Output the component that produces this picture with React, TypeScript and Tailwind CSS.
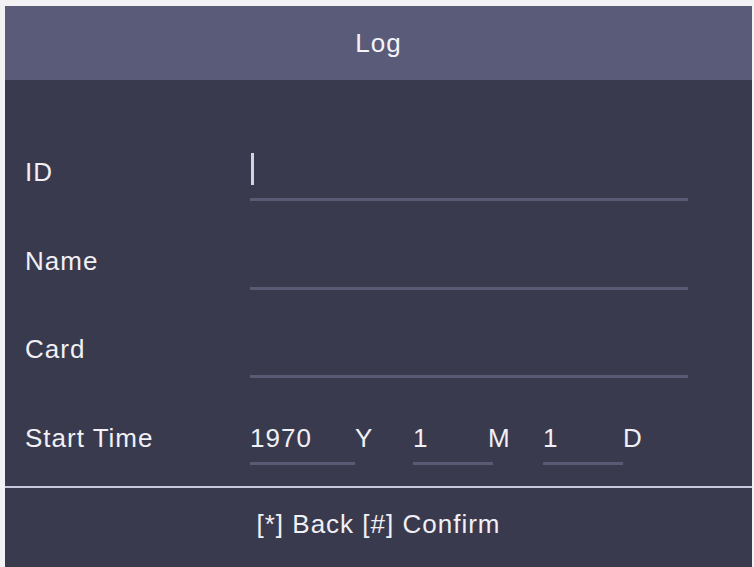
import React from "react";

const font = { fontFamily: '"Liberation Sans", Arial, sans-serif' };

// one label + underlined input line
const FieldRow = ({
  label,
  height,
  cursor,
}: {
  label: string;
  height: string;
  cursor?: boolean;
}) => (
  <div className={`flex items-end pr-[64px] ${height}`}>
    <div className="w-[245px] pl-[20px] mb-[16px] text-[26px] leading-[30px] tracking-[1px] text-[#f0f0f5]">
      {label}
    </div>
    <div className="flex-1 mb-[2px] h-[52px] border-b-[3px] border-[#595a73] flex items-start">
      {cursor && <div className="ml-[1px] mt-[4px] w-[3px] h-[32px] bg-[#d4d4e0]" />}
    </div>
  </div>
);

export default function App() {
  return (
    <div
      className="w-[754px] h-[567px] bg-[#f2f2f5] pt-[6px] pl-[5px] pr-[2px] overflow-hidden"
      style={font}
    >
      <div className="h-full flex flex-col bg-[#3a3a4e]">
        {/* title bar */}
        <div className="h-[74px] shrink-0 bg-[#5a5b78] flex items-center justify-center text-[26px] tracking-[1px] text-[#f3f3f8]">
          Log
        </div>

        {/* form */}
        <div className="pt-[34px]">
          <FieldRow label="ID" height="h-[89px]" cursor />
          <FieldRow label="Name" height="h-[89px]" />
          <FieldRow label="Card" height="h-[88px]" />

          {/* start date */}
          <div className="flex items-end h-[87px]">
            <div className="w-[245px] pl-[20px] mb-[14px] text-[26px] leading-[30px] tracking-[1px] text-[#f0f0f5]">
              Start Time
            </div>
            <div className="flex items-end text-[26px] leading-[30px] tracking-[1px] text-[#f0f0f5]">
              <div className="w-[105px] mb-[2px] pb-[9px] border-b-[3px] border-[#595a73]">1970</div>
              <div className="w-[58px] mb-[14px]">Y</div>
              <div className="w-[80px] mb-[2px] pb-[9px] border-b-[3px] border-[#595a73]">1</div>
              <div className="w-[55px] -ml-[5px] mb-[14px]">M</div>
              <div className="w-[80px] mb-[2px] pb-[9px] border-b-[3px] border-[#595a73]">1</div>
              <div className="mb-[14px]">D</div>
            </div>
          </div>
        </div>

        <div className="h-[19px] shrink-0" />
        <div className="h-[2px] shrink-0 bg-[#c8c8dc]" />

        {/* key hints */}
        <div className="flex-1 flex items-center justify-center pb-[6px] text-[26px] tracking-[1px] text-[#f0f0f5]">
          [*] Back [#] Confirm
        </div>
      </div>
    </div>
  );
}
